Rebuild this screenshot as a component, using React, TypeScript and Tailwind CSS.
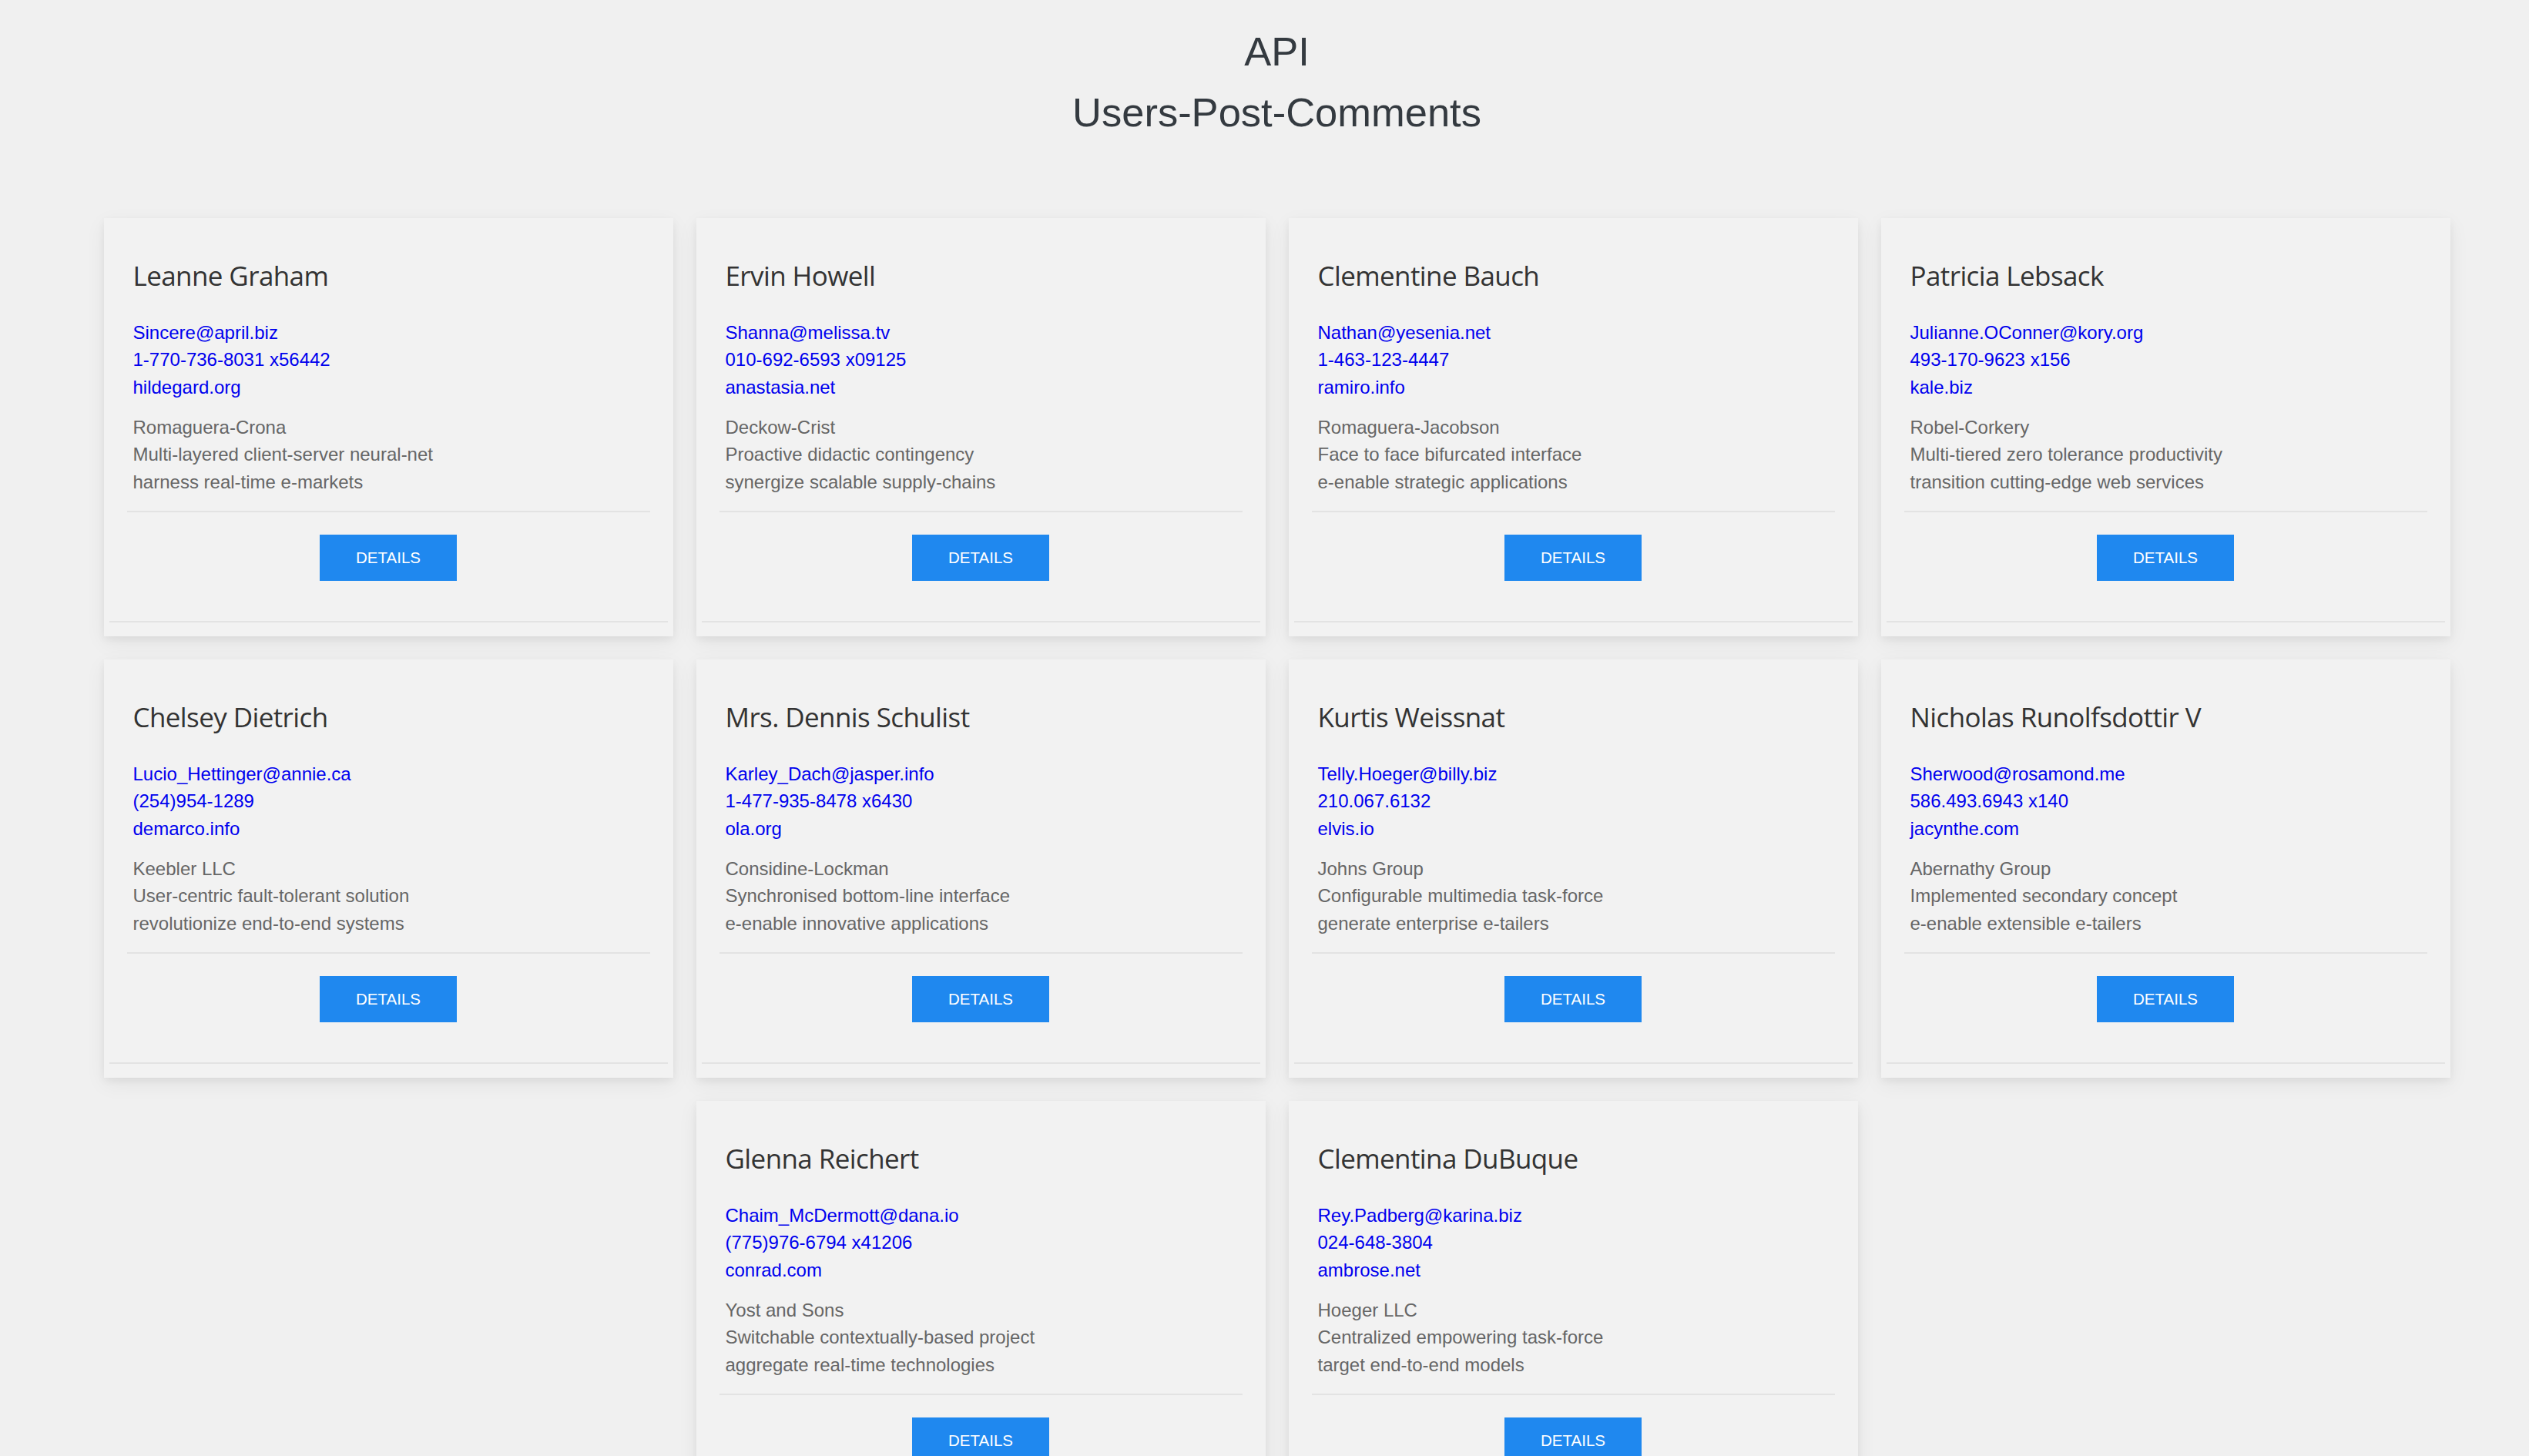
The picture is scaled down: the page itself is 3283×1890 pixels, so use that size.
const USERS = [
  { id: 1, name: 'Leanne Graham', email: 'Sincere@april.biz', phone: '1-770-736-8031 x56442', website: 'hildegard.org', company: 'Romaguera-Crona', catchPhrase: 'Multi-layered client-server neural-net', bs: 'harness real-time e-markets' },
  { id: 2, name: 'Ervin Howell', email: 'Shanna@melissa.tv', phone: '010-692-6593 x09125', website: 'anastasia.net', company: 'Deckow-Crist', catchPhrase: 'Proactive didactic contingency', bs: 'synergize scalable supply-chains' },
  { id: 3, name: 'Clementine Bauch', email: 'Nathan@yesenia.net', phone: '1-463-123-4447', website: 'ramiro.info', company: 'Romaguera-Jacobson', catchPhrase: 'Face to face bifurcated interface', bs: 'e-enable strategic applications' },
  { id: 4, name: 'Patricia Lebsack', email: 'Julianne.OConner@kory.org', phone: '493-170-9623 x156', website: 'kale.biz', company: 'Robel-Corkery', catchPhrase: 'Multi-tiered zero tolerance productivity', bs: 'transition cutting-edge web services' },
  { id: 5, name: 'Chelsey Dietrich', email: 'Lucio_Hettinger@annie.ca', phone: '(254)954-1289', website: 'demarco.info', company: 'Keebler LLC', catchPhrase: 'User-centric fault-tolerant solution', bs: 'revolutionize end-to-end systems' },
  { id: 6, name: 'Mrs. Dennis Schulist', email: 'Karley_Dach@jasper.info', phone: '1-477-935-8478 x6430', website: 'ola.org', company: 'Considine-Lockman', catchPhrase: 'Synchronised bottom-line interface', bs: 'e-enable innovative applications' },
  { id: 7, name: 'Kurtis Weissnat', email: 'Telly.Hoeger@billy.biz', phone: '210.067.6132', website: 'elvis.io', company: 'Johns Group', catchPhrase: 'Configurable multimedia task-force', bs: 'generate enterprise e-tailers' },
  { id: 8, name: 'Nicholas Runolfsdottir V', email: 'Sherwood@rosamond.me', phone: '586.493.6943 x140', website: 'jacynthe.com', company: 'Abernathy Group', catchPhrase: 'Implemented secondary concept', bs: 'e-enable extensible e-tailers' },
  { id: 9, name: 'Glenna Reichert', email: 'Chaim_McDermott@dana.io', phone: '(775)976-6794 x41206', website: 'conrad.com', company: 'Yost and Sons', catchPhrase: 'Switchable contextually-based project', bs: 'aggregate real-time technologies' },
  { id: 10, name: 'Clementina DuBuque', email: 'Rey.Padberg@karina.biz', phone: '024-648-3804', website: 'ambrose.net', company: 'Hoeger LLC', catchPhrase: 'Centralized empowering task-force', bs: 'target end-to-end models' },
];

type User = (typeof USERS)[number];

function UserCard({ user }: { user: User }) {
  return (
    <div className="flex h-[543px] w-[739px] flex-col bg-[#f2f2f2] shadow-[0_4px_10px_0_rgba(0,0,0,0.05),0_8px_26px_0_rgba(0,0,0,0.06)]">
      <div className="px-[38px] pt-[53px]">
        <h2 className="font-['Open_Sans','Noto_Sans',sans-serif] text-[35px] leading-[43px] font-[380] tracking-[-0.6px] text-[#333]">
          {user.name}
        </h2>
        <div className="mt-[35px] text-[24px] leading-[35.7px] text-[#0000ee]">
          <a className="block">{user.email}</a>
          <a className="block">{user.phone}</a>
          <a className="block">{user.website}</a>
        </div>
        <div className="mt-[16px] text-[24px] leading-[35.7px] text-[#666]">
          <p>{user.company}</p>
          <p>{user.catchPhrase}</p>
          <p>{user.bs}</p>
        </div>
      </div>
      <div className="mx-[30px] mt-[19px] h-[2px] bg-[#e3e3e3]" />
      <button className="mt-[29px] h-[60px] w-[178px] self-center bg-[#1f88ef] pt-[2px] text-[20.5px] text-white uppercase">
        Details
      </button>
      <div className="mx-[7px] mt-[52px] h-[2px] bg-[#e3e3e3]" />
    </div>
  );
}

export default function App() {
  return (
    <div className="min-h-screen bg-[#f0f0f0] pl-[32px] font-['Liberation_Sans',Arial,sans-serif]">
      <h1 className="pt-[28px] text-center text-[52.5px] leading-[1.5] font-normal text-[#343a40]">
        API
        <br />
        Users-Post-Comments
      </h1>
      <div className="mx-auto mt-[97px] flex max-w-[3046px] flex-wrap justify-center gap-[30px] pb-[40px]">
        {USERS.map((user) => (
          <UserCard key={user.id} user={user} />
        ))}
      </div>
    </div>
  );
}
